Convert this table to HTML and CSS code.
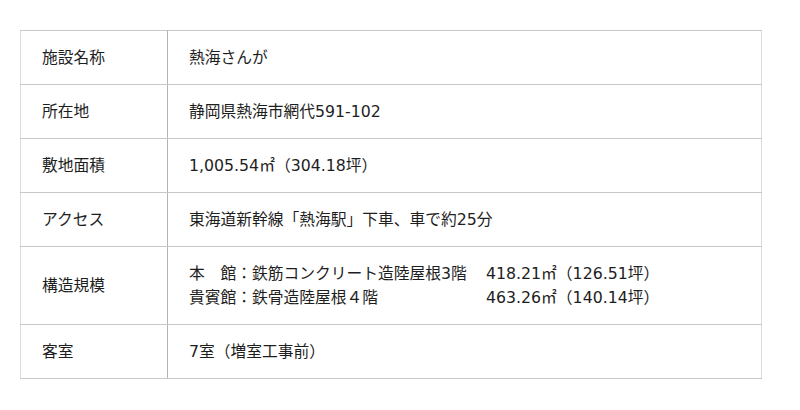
FILE: index.html
```html
<!DOCTYPE html>
<html lang="ja">
<head>
<meta charset="utf-8">
<link rel="stylesheet" href="styles.css">
</head>
<body>
<table class="spec">
  <tr><th>施設名称</th><td>熱海さんが</td></tr>
  <tr><th>所在地</th><td>静岡県熱海市網代591-102</td></tr>
  <tr><th>敷地面積</th><td>1,005.54㎡（304.18坪）</td></tr>
  <tr><th>アクセス</th><td>東海道新幹線「熱海駅」下車、車で約25分</td></tr>
  <tr><th>構造規模</th><td>
    <div class="struct">
      <span>本　館：鉄筋コンクリート造陸屋根3階</span><span>418.21㎡（126.51坪）</span>
      <span>貴賓館：鉄骨造陸屋根４階</span><span>463.26㎡（140.14坪）</span>
    </div>
  </td></tr>
  <tr><th>客室</th><td>7室（増室工事前）</td></tr>
</table>
</body>
</html>
```
FILE: styles.css
```css
html, body {
  margin: 0;
  background: #ffffff;
}
body {
  padding: 30px 0 0 20px;
  font-family: "DejaVu Sans", "Noto Sans CJK JP", sans-serif;
  font-size: 15.75px;
  color: #1e1e1e;
}
.spec {
  border-collapse: collapse;
  width: 742px;
  border: 1px solid #dddddd;
}
.spec th, .spec td {
  text-align: left;
  font-weight: normal;
  vertical-align: middle;
  line-height: 24px;
  padding: 15px 21px 14px 21px;
  border-top: 1px solid #c8c8c8;
  border-bottom: 1px solid #c8c8c8;
}
.spec th {
  width: 104px;
  border-right: 1px solid #b4b4b4;
}
.struct {
  display: grid;
  grid-template-columns: 297px auto;
}
```
